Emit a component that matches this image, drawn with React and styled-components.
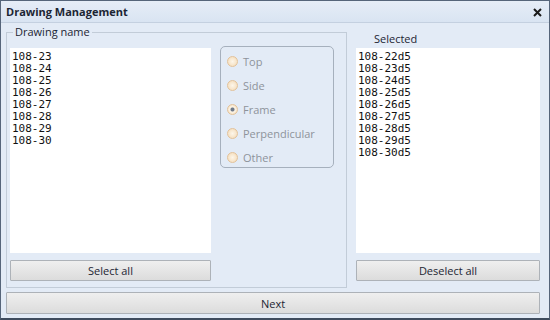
import React from 'react'
import styled, { createGlobalStyle } from 'styled-components'

const GlobalStyle = createGlobalStyle`
  html, body {
    margin: 0;
    padding: 0;
    background: #ffffff;
  }
  body {
    font-family: "Open Sans", "Noto Sans", sans-serif;
  }
`

const drawings = ['108-23', '108-24', '108-25', '108-26', '108-27', '108-28', '108-29', '108-30']
const selected = ['108-22d5', '108-23d5', '108-24d5', '108-25d5', '108-26d5', '108-27d5', '108-28d5', '108-29d5', '108-30d5']
const views = [
  { label: 'Top', checked: false },
  { label: 'Side', checked: false },
  { label: 'Frame', checked: true },
  { label: 'Perpendicular', checked: false },
  { label: 'Other', checked: false },
]

function App() {
  return (
    <>
      <GlobalStyle />
      <Window>
        <TitleBar>
          <Title>Drawing Management</Title>
          <CloseButton>
            <svg width="9" height="9" viewBox="0 0 9 9">
              <path d="M1 1 L8 8 M8 1 L1 8" stroke="#1a1a1a" strokeWidth="2" />
            </svg>
          </CloseButton>
        </TitleBar>
        <Body>
          <TopRow>
            <GroupBox>
              <Legend>Drawing name</Legend>
              <GroupInner>
                <ListColumn>
                  <ListBox>
                    {drawings.map(d => <ListItem key={d}>{d}</ListItem>)}
                  </ListBox>
                  <Button>Select all</Button>
                </ListColumn>
                <RadioPanel>
                  {views.map(v => (
                    <RadioRow key={v.label}>
                      <RadioCircle $checked={v.checked} />
                      <RadioLabel>{v.label}</RadioLabel>
                    </RadioRow>
                  ))}
                </RadioPanel>
              </GroupInner>
            </GroupBox>
            <RightPanel>
              <SelectedLabel>Selected</SelectedLabel>
              <ListBox>
                {selected.map(d => <ListItem key={d}>{d}</ListItem>)}
              </ListBox>
              <Button>Deselect all</Button>
            </RightPanel>
          </TopRow>
          <Button $wide>Next</Button>
        </Body>
      </Window>
    </>
  )
}

export default App

const Window = styled.div`
  width: 550px;
  height: 320px;
  box-sizing: border-box;
  border: 1px solid #56657a;
  border-bottom: 2px solid #3f4c5e;
  background: #e3ebf6;
  display: flex;
  flex-direction: column;
`

const TitleBar = styled.div`
  height: 21px;
  flex-shrink: 0;
  display: flex;
  align-items: center;
  justify-content: space-between;
  padding: 0 6px 0 5px;
  background: linear-gradient(#e6edf7, #d9e4f2);
  border-bottom: 1px solid #c4d0e0;
`

const Title = styled.div`
  font-size: 11px;
  font-weight: bold;
  color: #1c2533;
`

const CloseButton = styled.div`
  width: 12px;
  height: 12px;
  display: flex;
  align-items: center;
  justify-content: center;
  margin-top: 1px;
`

const Body = styled.div`
  flex: 1;
  display: flex;
  flex-direction: column;
  padding: 1px 5px 4px 5px;
  gap: 4px;
`

const TopRow = styled.div`
  display: flex;
  height: 264px;
  flex-shrink: 0;
`

const GroupBox = styled.fieldset`
  margin: 0;
  width: 341px;
  box-sizing: border-box;
  border: 1px solid #c2ccd8;
  padding: 8px 0 6px 3px;
  min-width: 0;
`

const Legend = styled.legend`
  font-size: 11px;
  line-height: 16px;
  height: 16px;
  color: #1c2533;
  padding: 0 2px;
  margin-left: 3px;
`

const GroupInner = styled.div`
  display: flex;
  gap: 9px;
`

const ListColumn = styled.div`
  width: 201px;
  display: flex;
  flex-direction: column;
  gap: 7px;
`

const ListBox = styled.div`
  height: 205px;
  flex-shrink: 0;
  background: #ffffff;
  padding: 3px 2px;
  box-sizing: border-box;
`

const ListItem = styled.div`
  font-family: "DejaVu Sans Mono", "Liberation Mono", monospace;
  font-size: 11px;
  line-height: 12px;
  height: 12px;
  color: #111111;
`

const Button = styled.div`
  height: ${p => (p.$wide ? '22px' : '21px')};
  flex-shrink: 0;
  box-sizing: border-box;
  border: 1px solid #adb2b8;
  border-radius: 1px;
  background: linear-gradient(#efefef, #dcdcdc);
  display: flex;
  align-items: center;
  justify-content: center;
  font-size: 11px;
  color: #1c2533;
  margin-right: ${p => (p.$wide ? '4px' : '0')};
`

const RadioPanel = styled.div`
  width: 114px;
  height: 122px;
  box-sizing: border-box;
  margin-top: -2px;
  border: 1px solid #a6b0bd;
  border-radius: 5px;
  padding: 6px 0 0 6px;
  display: flex;
  flex-direction: column;
  gap: 7px;
`

const RadioRow = styled.div`
  display: flex;
  align-items: center;
  gap: 5px;
  height: 17px;
`

const RadioCircle = styled.div`
  width: 11px;
  height: 11px;
  box-sizing: border-box;
  border-radius: 50%;
  border: 1px solid #e2c29a;
  background: radial-gradient(circle, ${p => (p.$checked ? '#6f7a8a 0, #6f7a8a 1.5px, #fcf4e6 2.5px' : '#fdf6ea 0')}, #f3d9b4 100%);
`

const RadioLabel = styled.span`
  font-size: 11px;
  color: #8e939b;
`

const RightPanel = styled.div`
  flex: 1;
  display: flex;
  flex-direction: column;
  padding: 0 4px 0 9px;
  gap: 7px;
`

const SelectedLabel = styled.div`
  font-size: 11px;
  color: #1c2533;
  padding-left: 18px;
  height: 16px;
  line-height: 16px;
  margin-top: 7px;
  margin-bottom: -6px;
`
